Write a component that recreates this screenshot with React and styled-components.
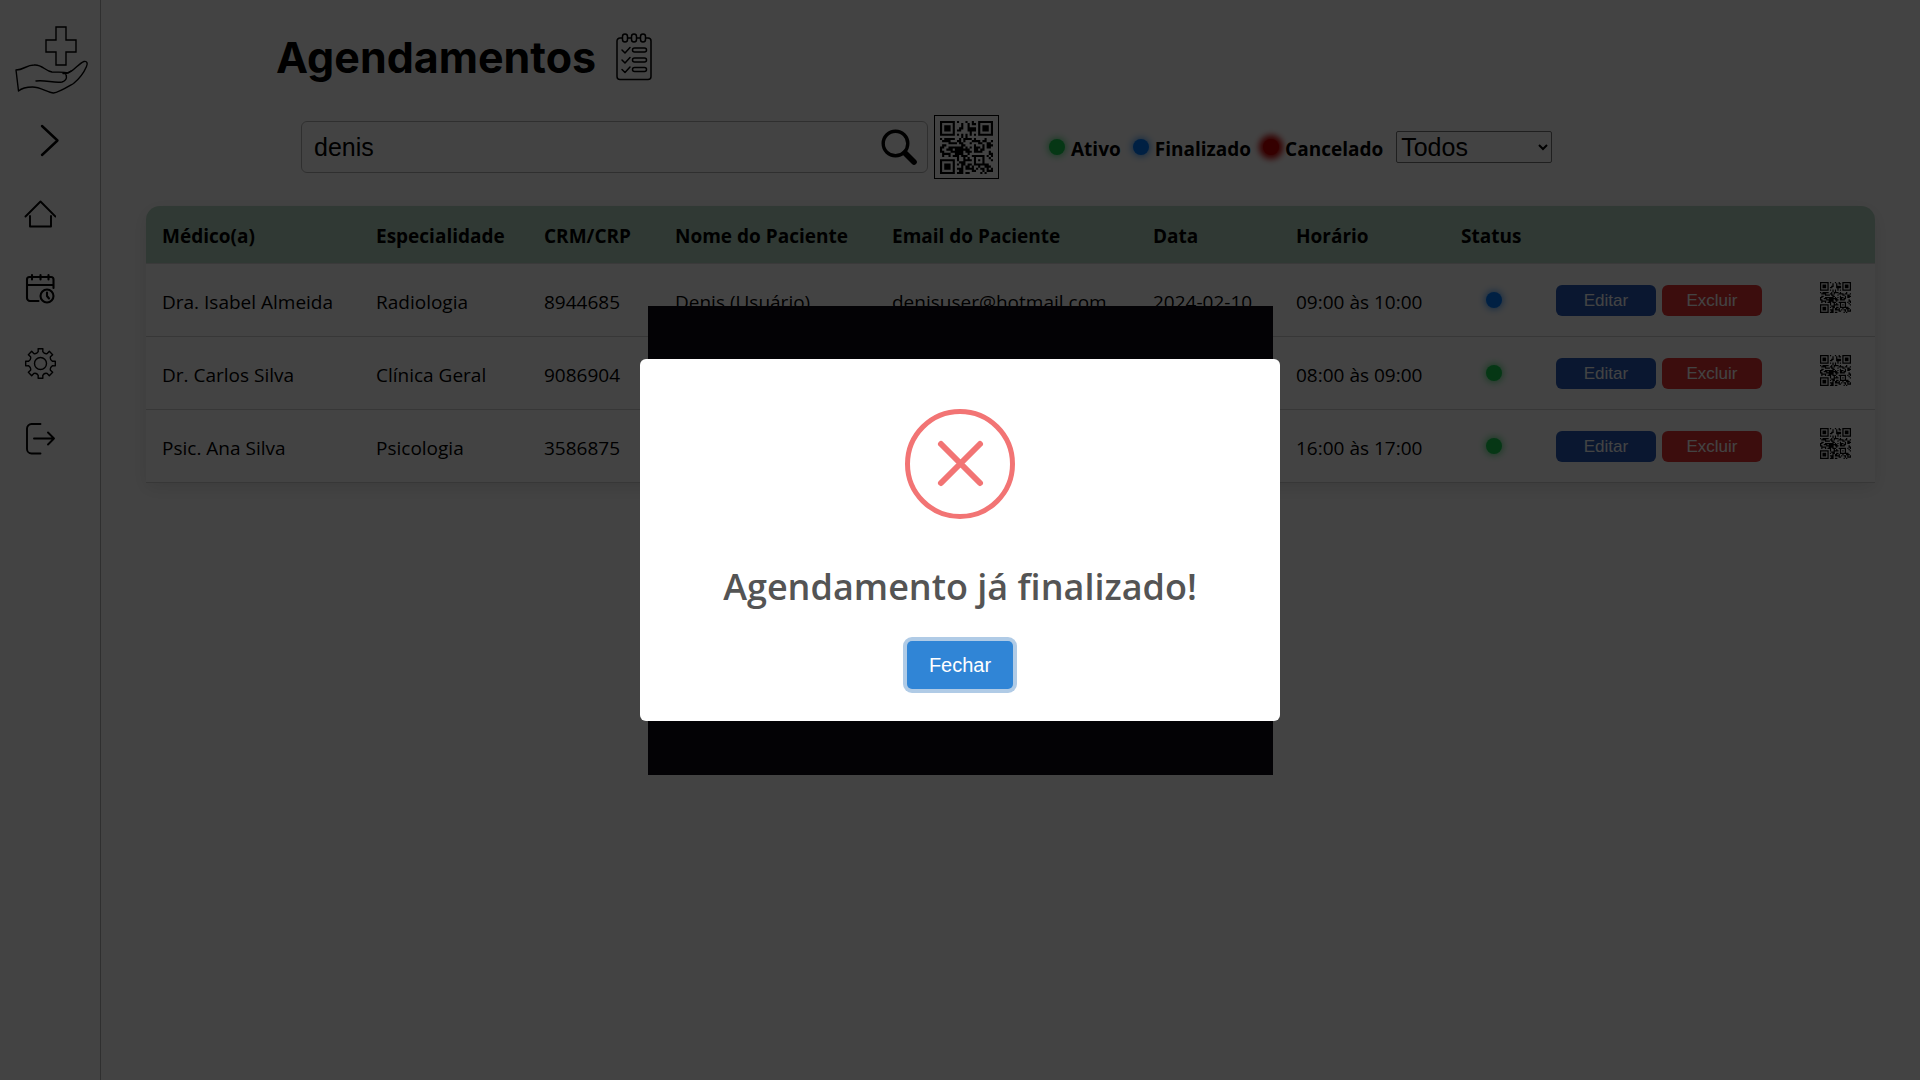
import React from "react";
import styled, { createGlobalStyle, css } from "styled-components";

const GlobalStyle = createGlobalStyle`
  *, *::before, *::after { box-sizing: border-box; }
  body {
    margin: 0;
    background: #fff;
    color: #000;
    font-family: "Open Sans", "Noto Sans", sans-serif;
    font-size: 19px;
  }
`;

const arial = `"Liberation Sans", Arial, sans-serif`;

/* ---------- page ---------- */

const Page = styled.div`
  display: flex;
  min-height: 100vh;
`;

const Sidebar = styled.aside`
  flex: 0 0 101px;
  border-right: 1px solid #b4b4b4;
  padding-top: 24px;
`;

const Logo = styled.a`
  display: block;
  margin-left: 14px;
  height: 72px;
  svg { display: block; }
`;

const Toggle = styled.button`
  display: block;
  margin: 28px 0 0 32px;
  padding: 0;
  border: 0;
  background: none;
  svg { display: block; }
`;

const Menu = styled.nav`
  display: flex;
  flex-direction: column;
  gap: 43px;
  margin: 41px 0 0 24px;
`;

const MenuLink = styled.a`
  display: block;
  width: 32px;
  height: 32px;
  color: #000;
  svg { display: block; }
`;

const Main = styled.main`
  flex: 1;
  min-width: 0;
  padding: 33px 45px 0;
`;

const TitleRow = styled.header`
  display: flex;
  align-items: center;
  gap: 20px;
  height: 48px;
  padding-left: 130px;
`;

const Title = styled.h1`
  margin: 0;
  font: 700 43px/46px Inter, sans-serif;
`;

const Toolbar = styled.div`
  display: flex;
  align-items: center;
  height: 64px;
  margin-top: 34px;
  padding-left: 155px;
`;

const SearchBox = styled.label`
  display: flex;
  align-items: center;
  width: 627px;
  height: 52px;
  padding: 0 10px 0 12px;
  border: 1px solid #b4b4b4;
  border-radius: 6px;
`;

const SearchInput = styled.input`
  flex: 1;
  min-width: 0;
  padding: 0;
  border: 0;
  outline: 0;
  background: none;
  color: #000;
  font: 25px/30px ${arial};
`;

const QrButton = styled.button`
  display: grid;
  place-items: center;
  width: 65px;
  height: 64px;
  margin-left: 6px;
  padding: 0;
  border: 1px solid #000;
  background: none;
`;

const Legend = styled.ul`
  display: flex;
  align-items: center;
  gap: 12px;
  margin: 0 0 0 50px;
  padding: 0;
  list-style: none;
`;

const LegendItem = styled.li`
  display: flex;
  align-items: center;
  gap: 6px;
  font-weight: 700;
  line-height: 26px;
  padding-top: 4px;
`;

const tones = {
  ativo: css`
    background: #17d052;
    box-shadow: 0 0 8px #17d052;
  `,
  finalizado: css`
    background: #007bff;
    box-shadow: 0 0 8px #007bff;
  `,
  cancelado: css`
    background: #c80000;
    box-shadow: 0 0 6px 4px #c80000;
  `,
};

const Dot = styled.span`
  display: block;
  width: 16px;
  height: 16px;
  border-radius: 50%;
  ${({ $tone }) => tones[$tone]}
`;

const LegendDot = styled(Dot)`
  margin-bottom: 4px;
`;

const StatusSelect = styled.select`
  width: 156px;
  height: 32px;
  margin-left: 13px;
  padding: 0;
  border: 1px solid #767676;
  border-radius: 2px;
  background: #fff;
  color: #000;
  font: 25px ${arial};
`;

/* ---------- table ---------- */

const TableCard = styled.div`
  margin-top: 27px;
  border-radius: 14px 14px 0 0;
  overflow: hidden;
  box-shadow: 0 5px 18px rgba(0, 0, 0, 0.11);
`;

const Table = styled.table`
  width: 100%;
  border-collapse: separate;
  border-spacing: 0;
  table-layout: fixed;
`;

const Th = styled.th`
  height: 58px;
  padding: 3px 0 0 16px;
  background: #b6d8c4;
  border-bottom: 1px solid #ddd;
  text-align: left;
  font-weight: 700;
  white-space: nowrap;
`;

const Td = styled.td`
  height: 73px;
  padding: 3px 0 0 16px;
  border-bottom: 1px solid #d2d2d2;
  white-space: nowrap;
`;

const StatusCell = styled(Td)`
  padding: 0 0 0 41px;
`;

const ActionCell = styled(Td)`
  padding: 0 0 0 16px;
`;

const QrCell = styled(Td)`
  padding: 0 0 5px 16px;
  svg { display: block; }
`;

const Actions = styled.div`
  display: flex;
  gap: 6px;
`;

const ActionButton = styled.button`
  width: 100px;
  height: 31px;
  padding: 1px 0 0;
  border: 0;
  border-radius: 6px;
  background: ${({ $danger }) => ($danger ? "#e23434" : "#265ab8")};
  color: #fff;
  font: 17px ${arial};
`;

/* ---------- overlays ---------- */

const Layer = styled.div`
  position: fixed;
  inset: 0;
  display: grid;
  place-items: center;
`;

const Dimmer = styled(Layer)`
  background: rgba(0, 0, 0, 0.737);
`;

const Camera = styled.div`
  width: 625px;
  height: 469px;
  background: #0f0813;
`;

const Modal = styled.section`
  display: flex;
  flex-direction: column;
  align-items: center;
  width: 640px;
  padding: 50px 0 32px;
  border-radius: 6px;
  background: #fff;
  svg { display: block; }
`;

const ModalTitle = styled.h2`
  margin: 40px 0 0;
  color: #545454;
  font: 600 36px/56px "Open Sans", "Noto Sans", sans-serif;
`;

const CloseButton = styled.button`
  width: 106px;
  height: 48px;
  margin-top: 26px;
  padding: 0;
  border: 0;
  border-radius: 5px;
  background: #3085d6;
  box-shadow: 0 0 0 4px #b0cbe6;
  color: #fff;
  font: 20px ${arial};
`;

/* ---------- drawings ---------- */

const QR_SIZE = 25;

function finder(x, y, left, top) {
  const dx = x - left;
  const dy = y - top;
  if (dx < -1 || dy < -1 || dx > 7 || dy > 7) return null;
  const ring = Math.max(Math.abs(dx - 3), Math.abs(dy - 3));
  return ring !== 2 && ring !== 4;
}

function isDark(x, y) {
  for (const [l, t] of [[0, 0], [18, 0], [0, 18]]) {
    const value = finder(x, y, l, t);
    if (value !== null) return value;
  }
  const ring = Math.max(Math.abs(x - 18), Math.abs(y - 18));
  if (ring <= 2) return ring !== 1;
  if (y === 6) return x % 2 === 0;
  if (x === 6) return y % 2 === 0;
  const n = Math.sin(x * 12.9898 + y * 78.233) * 43758.5453;
  return n - Math.floor(n) < 0.52;
}

let qrPath = "";
for (let y = 0; y < QR_SIZE; y++) {
  for (let x = 0; x < QR_SIZE; x++) {
    if (isDark(x, y)) qrPath += `M${x} ${y}h1v1h-1z`;
  }
}

const QrCode = ({ size }) => (
  <svg width={size} height={size} viewBox="0 0 25 25" aria-hidden="true">
    <path d={qrPath} fill="#000" />
  </svg>
);

const Stroke = ({ w, h = w, sw = 1.9, children }) => (
  <svg width={w} height={h} viewBox={`0 0 ${w} ${h}`} fill="none" stroke="#000" strokeWidth={sw}
    strokeLinecap="round" strokeLinejoin="round" aria-hidden="true">
    {children}
  </svg>
);

const LogoIcon = () => (
  <Stroke w={76} h={72} sw={1.4}>
    <path d="M42 3h10v13h10v12H52v13H42V28H32V16h10z" strokeLinejoin="miter" />
    <path d="M2 46c8 0 10-5 18-5 8-1 11 6 18 7 5 .5 11-.5 16 1 6-2 11-10 16-11.500 3-.8 4 2 2.500 5-3 7-8 13-13 17-7 4-15 9-20 9.500-6-.5-13-6-21-6-6 0-10 .5-14 4z" />
    <path d="M22 57c9-1.500 18 2.500 26 1 6-2 5-7 2.500-9M49 49.500c3 .2 6-1 8-2.500" />
  </Stroke>
);

const ChevronIcon = () => (
  <Stroke w={36} h={33} sw={2.4}>
    <path d="M10 2l15.500 14.500L10 31" />
  </Stroke>
);

const HomeIcon = () => (
  <Stroke w={32}>
    <path d="M1.500 18.500L16.500 3.500l15 15M6 18v10.500h21V18" />
  </Stroke>
);

const CalendarIcon = () => (
  <Stroke w={32} sw={2.1}>
    <path d="M14.500 28H6a3 3 0 0 1-3-3V6.500a2.500 2.500 0 0 1 2.500-2.500H27a2.500 2.500 0 0 1 2.500 2.500V15M3 12h26.500M8 2v4.500M16.500 2v4.500M24.500 2v4.500" />
    <circle cx="23" cy="23" r="6.500" />
    <path d="M23 19.500v3.500l2 2.500" />
  </Stroke>
);

const GearIcon = () => {
  const teeth = [0, 45, 90, 135, 180, 225, 270, 315];
  const at = (deg, r) => {
    const a = (deg * Math.PI) / 180;
    return `${(16.5 + Math.sin(a) * r).toFixed(2)} ${(15.5 - Math.cos(a) * r).toFixed(2)}`;
  };
  const outline = teeth
    .map((deg, i) => `${i ? "L" : "M"}${at(deg - 11, 12)}L${at(deg - 9, 15)}L${at(deg + 9, 15)}L${at(deg + 11, 12)}Q${at(deg + 22.5, 10)} ${at(deg + 34, 12)}`)
    .join("");
  return (
    <Stroke w={32} sw={1.4}>
      <path d={`${outline}Z`} />
      <circle cx="16.500" cy="15.500" r="6" />
    </Stroke>
  );
};

const ExitIcon = () => (
  <Stroke w={32}>
    <path d="M16.500 1H7.500a4.500 4.500 0 0 0-4.500 4.500v20.500a4.500 4.500 0 0 0 4.500 4.500h9M10 15.500h20M24 9.500l6 6-6 6" />
  </Stroke>
);

const ChecklistIcon = () => (
  <Stroke w={36} h={48} sw={1.5}>
    <path d="M6 5H4a3 3 0 0 0-3 3v35.500a3 3 0 0 0 3 3h28a3 3 0 0 0 3-3V8a3 3 0 0 0-3-3h-2M12 5h3M21 5h3" />
    {[6.5, 15.5, 24.5].map((x) => <rect key={x} x={x} y="1" width="5" height="8" rx="2.500" />)}
    {[17, 27, 36.5].map((y) => (
      <g key={y}>
        <path d={`M6 ${y}l3 3 5-5.500`} />
        <rect x="16.500" y={y - 2} width="14" height="4" rx="2" />
      </g>
    ))}
  </Stroke>
);

const SearchIcon = () => (
  <Stroke w={36} sw={3.4}>
    <circle cx="14.500" cy="14.500" r="12.300" />
    <path d="M24 24l9 9" strokeWidth="5.600" />
  </Stroke>
);

const ErrorIcon = () => (
  <svg width="110" height="110" viewBox="0 0 110 110" fill="none" stroke="#f27474" aria-hidden="true">
    <circle cx="55" cy="55" r="52.500" strokeWidth="5" />
    <path d="M36 35L75 74M75 35L36 74" strokeWidth="6" strokeLinecap="round" />
  </svg>
);

/* ---------- content ---------- */

const columns = [
  ["Médico(a)", 214],
  ["Especialidade", 168],
  ["CRM/CRP", 131],
  ["Nome do Paciente", 217],
  ["Email do Paciente", 261],
  ["Data", 143],
  ["Horário", 165],
  ["Status", 95],
  ["", 264],
  ["", 71],
];

const rows = [
  ["Dra. Isabel Almeida", "Radiologia", "8944685", "Denis (Usuário)", "denisuser@hotmail.com", "2024-02-10", "09:00 às 10:00", "finalizado"],
  ["Dr. Carlos Silva", "Clínica Geral", "9086904", "", "", "", "08:00 às 09:00", "ativo"],
  ["Psic. Ana Silva", "Psicologia", "3586875", "", "", "", "16:00 às 17:00", "ativo"],
];

const menu = [
  ["Início", HomeIcon],
  ["Agendamentos", CalendarIcon],
  ["Configurações", GearIcon],
  ["Sair", ExitIcon],
];

export default function App() {
  return (
    <>
      <GlobalStyle />
      <Page>
        <Sidebar>
          <Logo href="#" aria-label="Página inicial"><LogoIcon /></Logo>
          <Toggle aria-label="Abrir menu"><ChevronIcon /></Toggle>
          <Menu>
            {menu.map(([label, Icon]) => (
              <MenuLink key={label} href="#" aria-label={label}><Icon /></MenuLink>
            ))}
          </Menu>
        </Sidebar>
        <Main>
          <TitleRow>
            <Title>Agendamentos</Title>
            <ChecklistIcon />
          </TitleRow>
          <Toolbar>
            <SearchBox>
              <SearchInput type="text" aria-label="Pesquisar" defaultValue="denis" />
              <SearchIcon />
            </SearchBox>
            <QrButton aria-label="Ler QR code"><QrCode size={53} /></QrButton>
            <Legend>
              <LegendItem><LegendDot $tone="ativo" />Ativo</LegendItem>
              <LegendItem><LegendDot $tone="finalizado" />Finalizado</LegendItem>
              <LegendItem><LegendDot $tone="cancelado" />Cancelado</LegendItem>
            </Legend>
            <StatusSelect aria-label="Status" defaultValue="Todos">
              <option>Todos</option>
            </StatusSelect>
          </Toolbar>
          <TableCard>
            <Table>
              <colgroup>
                {columns.map(([, width], i) => <col key={i} style={{ width }} />)}
              </colgroup>
              <thead>
                <tr>{columns.map(([name], i) => <Th key={i}>{name}</Th>)}</tr>
              </thead>
              <tbody>
                {rows.map((row) => (
                  <tr key={row[2]}>
                    {row.slice(0, 7).map((value, i) => <Td key={i}>{value}</Td>)}
                    <StatusCell><Dot $tone={row[7]} /></StatusCell>
                    <ActionCell>
                      <Actions>
                        <ActionButton>Editar</ActionButton>
                        <ActionButton $danger>Excluir</ActionButton>
                      </Actions>
                    </ActionCell>
                    <QrCell><QrCode size={31} /></QrCell>
                  </tr>
                ))}
              </tbody>
            </Table>
          </TableCard>
        </Main>
      </Page>
      <Layer><Camera /></Layer>
      <Dimmer>
        <Modal role="dialog" aria-modal="true" aria-labelledby="modal-title">
          <ErrorIcon />
          <ModalTitle id="modal-title">Agendamento já finalizado!</ModalTitle>
          <CloseButton>Fechar</CloseButton>
        </Modal>
      </Dimmer>
    </>
  );
}
